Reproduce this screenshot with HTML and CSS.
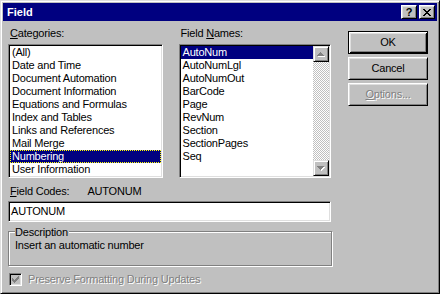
FILE: index.html
```html
<!DOCTYPE html>
<html>
<head>
<meta charset="utf-8">
<title>Field</title>
<link rel="stylesheet" href="styles.css">
</head>
<body>
<div class="window">
  <div class="titlebar">
    <span class="title">Field</span>
    <div class="tbtns">
      <span class="tbtn help">?</span>
      <span class="tbtn close">
        <svg width="8" height="7" viewBox="0 0 8 7" shape-rendering="crispEdges"><path d="M0 0h2v1h-2zM6 0h2v1h-2zM1 1h2v1h-2zM5 1h2v1h-2zM2 2h4v1h-4zM3 3h2v1h-2zM2 4h4v1h-4zM1 5h2v1h-2zM5 5h2v1h-2zM0 6h2v1h-2zM6 6h2v1h-2z" fill="#000"/></svg>
      </span>
    </div>
  </div>
  <div class="content">
    <div class="toprow">
      <div class="col cat">
        <div class="lbl"><u>C</u>ategories:</div>
        <div class="listbox">
          <div class="item">(All)</div>
          <div class="item">Date and Time</div>
          <div class="item">Document Automation</div>
          <div class="item">Document Information</div>
          <div class="item">Equations and Formulas</div>
          <div class="item">Index and Tables</div>
          <div class="item">Links and References</div>
          <div class="item">Mail Merge</div>
          <div class="item sel focus">Numbering</div>
          <div class="item">User Information</div>
        </div>
      </div>
      <div class="col names">
        <div class="lbl">Field <u>N</u>ames:</div>
        <div class="listbox scrolled">
          <div class="items">
            <div class="item sel">AutoNum</div>
            <div class="item">AutoNumLgl</div>
            <div class="item">AutoNumOut</div>
            <div class="item">BarCode</div>
            <div class="item">Page</div>
            <div class="item">RevNum</div>
            <div class="item">Section</div>
            <div class="item">SectionPages</div>
            <div class="item">Seq</div>
          </div>
          <div class="scrollbar">
            <div class="sbtn">
              <svg width="8" height="5" viewBox="0 0 8 5" shape-rendering="crispEdges"><path d="M4 1h1v1h1v1h1v1h1v1h-7v-1z" fill="#fff"/><path d="M3 0h1v1h1v1h1v1h1v1h-7v-1h1v-1h1v-1h1z" fill="#808080"/></svg>
            </div>
            <div class="track"></div>
            <div class="sbtn">
              <svg width="8" height="5" viewBox="0 0 8 5" shape-rendering="crispEdges"><path d="M1 1h7v1h-1v1h-1v1h-1v1h-1v-1h-1v-1h-1z" fill="#fff"/><path d="M0 0h7v1h-1v1h-1v1h-1v1h-1v-1h-1v-1h-1v-1h-1z" fill="#808080"/></svg>
            </div>
          </div>
        </div>
      </div>
      <div class="buttons">
        <div class="btn default">OK</div>
        <div class="btn">Cancel</div>
        <div class="btn disabled"><span class="dis"><u>O</u>ptions...</span></div>
      </div>
    </div>
    <div class="codesrow"><span class="codelbl"><u>F</u>ield Codes:</span><span class="codeval">AUTONUM</span></div>
    <div class="edit">AUTONUM</div>
    <div class="group">
      <div class="legend">Description</div>
      <div class="desc">Insert an automatic number</div>
    </div>
    <div class="check">
      <span class="box">
        <svg width="7" height="7" viewBox="0 0 7 7" shape-rendering="crispEdges"><path d="M6 0h1v3h-1v1h-1v1h-1v1h-1v1h-1v-1h-1v-1h-1v-3h1v1h1v1h1v-1h1v-1h1z" fill="#808080"/></svg>
      </span>
      <span class="cklbl dis">Preserve Formatting During Updates</span>
    </div>
  </div>
</div>
</body>
</html>
```

FILE: styles.css
```css
html, body {
  margin: 0;
  padding: 0;
}
body {
  width: 440px;
  height: 294px;
  background: #c0c0c0;
  font-family: "Liberation Sans", Arial, sans-serif;
  font-size: 11px;
  line-height: 13px;
  letter-spacing: -0.2px;
  color: #000;
  overflow: hidden;
}
.window {
  box-sizing: border-box;
  width: 440px;
  height: 294px;
  border: 1px solid;
  border-color: #dfdfdf #000 #000 #dfdfdf;
  box-shadow: inset 1px 1px #fff, inset -1px -1px #808080;
  padding: 2px;
  background: #c0c0c0;
  display: flex;
  flex-direction: column;
}
.titlebar {
  height: 18px;
  background: #000080;
  color: #fff;
  display: flex;
  align-items: center;
  justify-content: space-between;
  padding: 0 2px 0 4px;
  flex: none;
}
.title {
  font-weight: bold;
  letter-spacing: 0;
}
.tbtns {
  display: flex;
  gap: 2px;
}
.tbtn {
  box-sizing: border-box;
  width: 16px;
  height: 14px;
  background: #c0c0c0;
  border: 1px solid;
  border-color: #fff #000 #000 #fff;
  box-shadow: inset 1px 1px #dfdfdf, inset -1px -1px #808080;
  display: flex;
  align-items: center;
  justify-content: center;
  color: #000;
}
.help {
  font-weight: bold;
  font-size: 11px;
  line-height: 10px;
}
.content {
  flex: 1;
  padding: 6px 9px 0 5px;
  display: flex;
  flex-direction: column;
}
.toprow {
  display: flex;
}
.col {
  display: flex;
  flex-direction: column;
}
.cat {
  width: 155px;
}
.names {
  width: 153px;
  margin-left: 16px;
}
.lbl {
  height: 13px;
  padding-left: 2px;
  margin-bottom: 4px;
}
.listbox {
  box-sizing: border-box;
  height: 134px;
  background: #fff;
  border: 1px solid;
  border-color: #808080 #fff #fff #808080;
  box-shadow: inset 1px 1px #000, inset -1px -1px #dfdfdf;
  padding: 1px;
}
.item {
  height: 13px;
  padding-left: 2px;
  white-space: nowrap;
  overflow: hidden;
}
.item.sel {
  background: #000080;
  color: #fff;
}
.item.focus {
  outline: 1px dotted #ffff00;
  outline-offset: -1px;
}
.scrolled {
  display: flex;
}
.items {
  flex: 1;
  min-width: 0;
}
.scrollbar {
  width: 16px;
  display: flex;
  flex-direction: column;
}
.sbtn {
  box-sizing: border-box;
  width: 16px;
  height: 16px;
  background: #c0c0c0;
  border: 1px solid;
  border-color: #dfdfdf #000 #000 #dfdfdf;
  box-shadow: inset 1px 1px #fff, inset -1px -1px #808080;
  display: flex;
  align-items: center;
  justify-content: center;
}
.track {
  flex: 1;
  background: repeating-conic-gradient(#c0c0c0 0 25%, #fff 0 50%) 0 0 / 2px 2px;
}
.buttons {
  display: flex;
  flex-direction: column;
  gap: 3px;
  margin-left: 17px;
  margin-top: 4px;
}
.btn {
  box-sizing: border-box;
  width: 80px;
  height: 23px;
  border: 1px solid;
  border-color: #fff #000 #000 #fff;
  box-shadow: inset 1px 1px #dfdfdf, inset -1px -1px #808080;
  display: flex;
  align-items: center;
  justify-content: center;
}
.btn.default {
  border-color: #000;
  box-shadow: inset 1px 1px #fff, inset -1px -1px #000, inset 2px 2px #dfdfdf, inset -2px -2px #808080;
}
.dis {
  color: #808080;
  text-shadow: 1px 1px 0 #fff;
}
.codesrow {
  margin-top: 7px;
  height: 13px;
  padding-left: 2px;
  display: flex;
}
.codeval {
  margin-left: 18px;
}
.edit {
  box-sizing: border-box;
  width: 323px;
  height: 21px;
  margin-top: 3px;
  background: #fff;
  border: 1px solid;
  border-color: #808080 #fff #fff #808080;
  box-shadow: inset 1px 1px #000, inset -1px -1px #dfdfdf;
  padding: 3px 2px 0 2px;
}
.group {
  box-sizing: border-box;
  width: 324px;
  height: 35px;
  margin-top: 9px;
  border: 1px solid #808080;
  box-shadow: inset 1px 1px #fff, 1px 1px 0 #fff;
  padding: 0 0 0 6px;
}
.legend {
  width: fit-content;
  margin: -6px 0 0 0;
  padding: 0 1px 0 0;
  background: #c0c0c0;
}
.desc {
  margin-top: 0;
}
.check {
  display: flex;
  align-items: center;
  margin-top: 7px;
  margin-left: 1px;
}
.box {
  box-sizing: border-box;
  width: 13px;
  height: 13px;
  border: 1px solid;
  border-color: #808080 #fff #fff #808080;
  box-shadow: inset 1px 1px #000, inset -1px -1px #dfdfdf;
  background: #c0c0c0;
  display: flex;
  align-items: center;
  justify-content: center;
}
.cklbl {
  margin-left: 6px;
}
```
